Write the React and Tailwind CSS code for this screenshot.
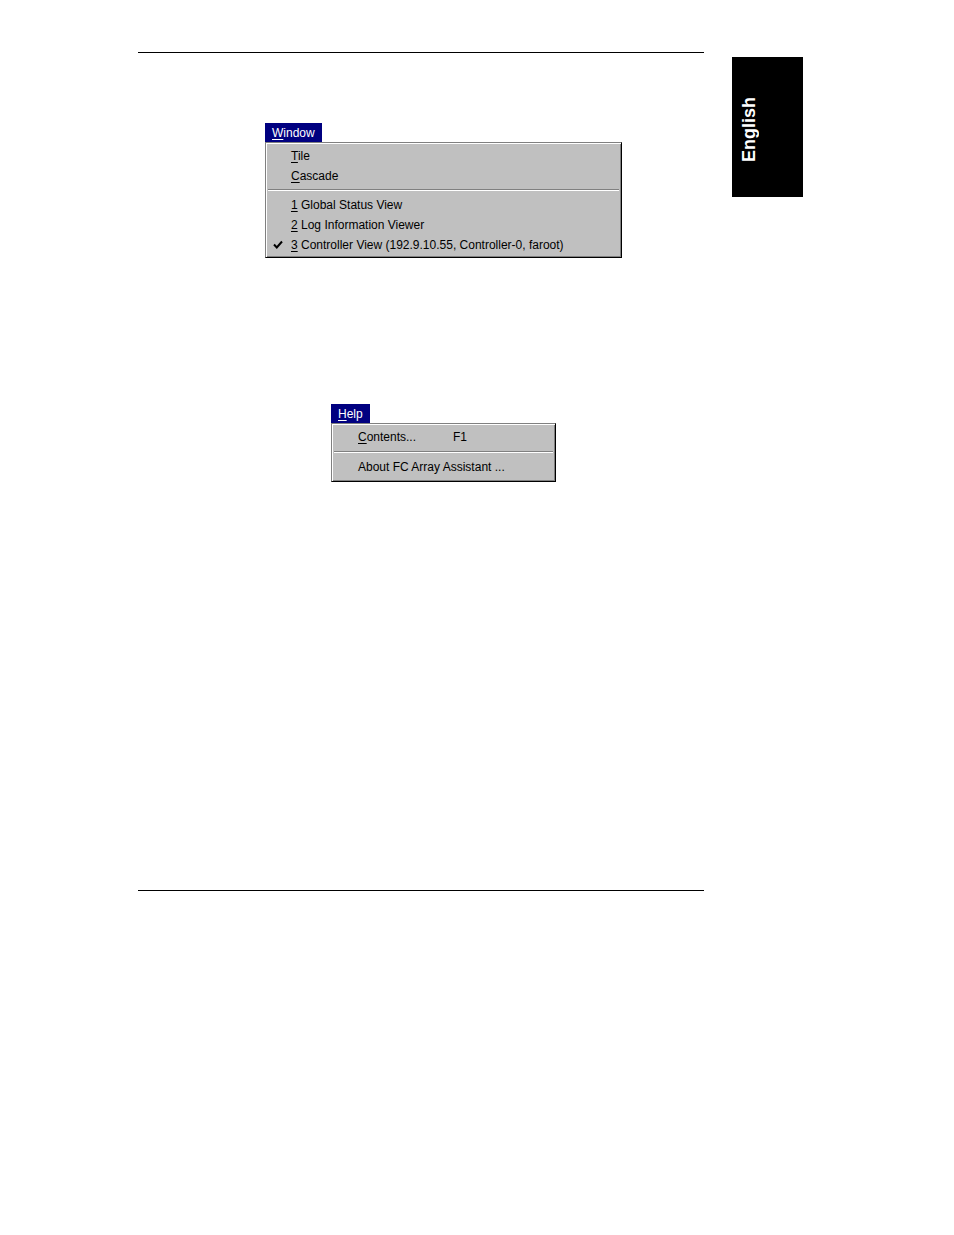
import React from "react";

const font = { fontFamily: '"Liberation Sans", Arial, sans-serif' };

function Sep() {
  return (
    <div className="mx-[1px]">
      <div className="h-px bg-[#808080]" />
      <div className="h-px bg-white" />
    </div>
  );
}

function Check() {
  return (
    <svg width="10" height="9" viewBox="0 0 10 9" className="block">
      <path d="M1 4.5 L3.8 7.5 L9 1.5" fill="none" stroke="#000" strokeWidth="2" />
    </svg>
  );
}

function Row({ children, check, lead = 24 }) {
  return (
    <div className="flex h-[20px] items-center pt-[1px] text-[12px] leading-none text-black">
      <div className="flex shrink-0 items-center pl-[6px]" style={{ width: lead }}>
        {check ? <Check /> : null}
      </div>
      <div className="flex items-center whitespace-nowrap">{children}</div>
    </div>
  );
}

function Panel({ w, children }) {
  return (
    <div
      className="border border-t-[#808080] border-l-[#808080] border-r-black border-b-black bg-[#c0c0c0] shadow-[inset_1px_1px_0_#ffffff,inset_-1px_-1px_0_#808080]"
      style={{ width: w }}
    >
      <div className="p-[1px]">{children}</div>
    </div>
  );
}

function Title({ children }) {
  return (
    <div className="flex h-[19px] w-fit items-center bg-[#000080] px-[7px] text-[12px] leading-none text-white">
      {children}
    </div>
  );
}

export default function App() {
  return (
    <div className="flex h-[1235px] w-[954px] bg-white" style={font}>
      <div className="w-[704px] shrink-0 pl-[138px]">
        <div className="mt-[52px] h-px w-[566px] bg-black" />

        <div className="ml-[127px] mt-[70px]">
          <Title>
            <span><u className="underline-offset-[2px]">W</u>indow</span>
          </Title>
          <Panel w={357}>
            <div className="h-[1px]" />
            <Row><span><u className="underline-offset-[2px]">T</u>ile</span></Row>
            <Row><span><u className="underline-offset-[2px]">C</u>ascade</span></Row>
            <div className="mb-[3px] mt-[4px]"><Sep /></div>
            <Row><span><u className="underline-offset-[2px]">1</u> Global Status View</span></Row>
            <Row><span><u className="underline-offset-[2px]">2</u> Log Information Viewer</span></Row>
            <Row check><span><u className="underline-offset-[2px]">3</u> Controller View (192.9.10.55, Controller-0, faroot)</span></Row>
            <div className="h-[2px]" />
          </Panel>
        </div>

        <div className="ml-[193px] mt-[146px]">
          <Title>
            <span><u className="underline-offset-[2px]">H</u>elp</span>
          </Title>
          <Panel w={225}>
            <div className="h-[1px]" />
            <Row lead={25}>
              <span className="w-[95px]"><u className="underline-offset-[2px]">C</u>ontents...</span>
              <span>F1</span>
            </Row>
            <div className="mb-[3px] mt-[5px]"><Sep /></div>
            <Row lead={25}><span>About FC Array Assistant ...</span></Row>
            <div className="h-[4px]" />
          </Panel>
        </div>

        <div className="mt-[408px] h-px w-[566px] bg-black" />
      </div>

      <div className="ml-[28px] mt-[57px] flex h-[140px] w-[71px] items-center bg-black pl-[8px] pt-[5px]">
        <span className="rotate-180 text-[18px] font-bold leading-none text-white [writing-mode:vertical-rl]">
          English
        </span>
      </div>
    </div>
  );
}
